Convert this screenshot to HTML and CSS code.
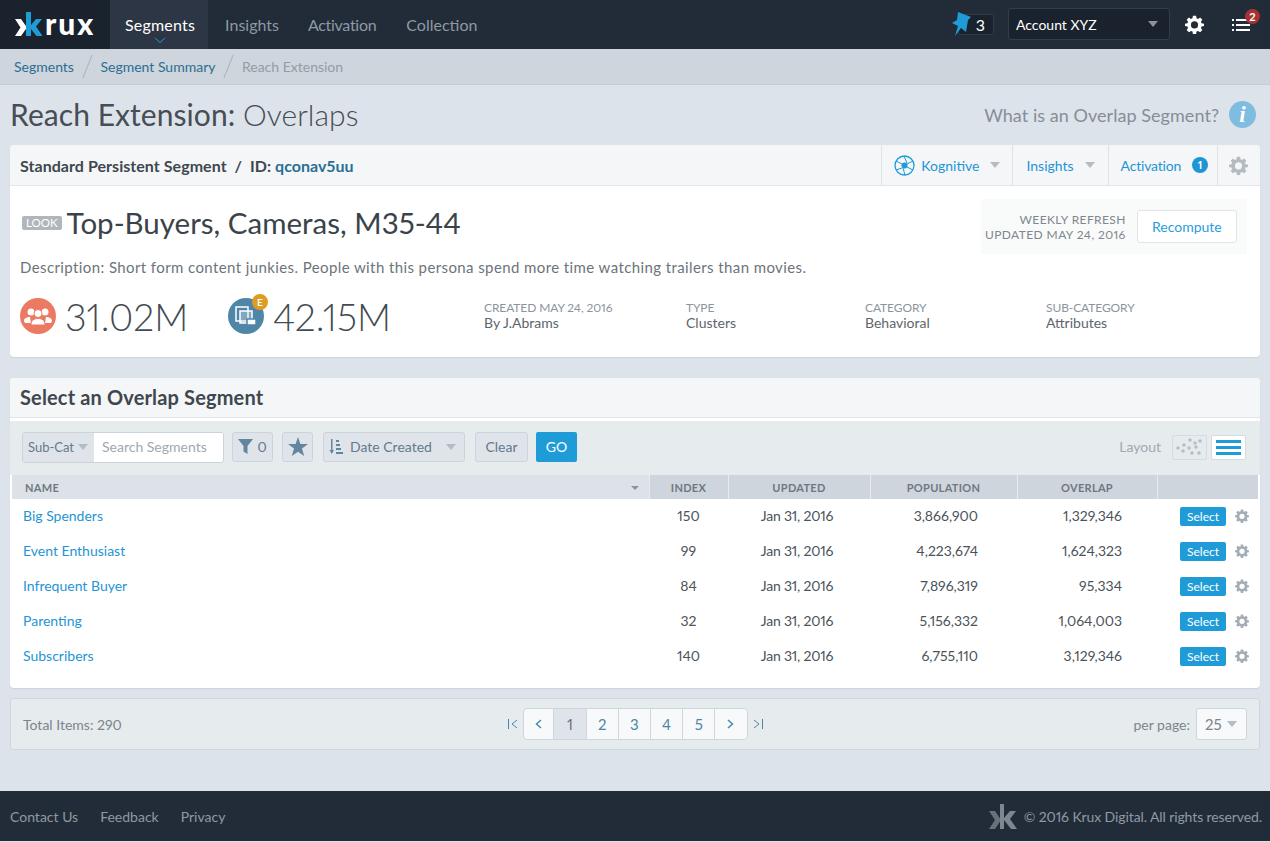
FILE: index.html
```html
<!DOCTYPE html>
<html lang="en">
<head>
    <meta charset="UTF-8">
    <title>Krux - Reach Extension: Overlaps</title>
    <link rel="stylesheet" href="styles.css">
</head>
<body>
    <svg class="defs" width="0" height="0">
        <symbol id="gear" viewBox="0 0 24 24">
            <path fill-rule="evenodd" d="M10 1h4l.6 3.100 1.900.8L19.100 3.100l2.800 2.800-1.800 2.600.8 1.900L24 11v3l-3.100.6-.8 1.900 1.800 2.600-2.800 2.800-2.600-1.800-1.900.8L14 24h-4l-.6-3.100-1.900-.8-2.600 1.800-2.800-2.800 1.800-2.600-.8-1.900L0 14v-3l3.100-.6.8-1.900-1.800-2.600 2.800-2.800 2.600 1.800 1.900-.8zM12 8a4.500 4.500 0 1 0 0 9 4.500 4.500 0 0 0 0-9z"/>
        </symbol>
    </svg>

    <header class="topbar">
        <a class="logo">
            <svg width="28" height="24" viewBox="0 0 28 24">
                <path fill="#fff" d="M0 7h6l6 8.500L6 24H0l5.500-8.500z"/>
                <path fill="#1f9cd8" d="M11 0h5v13l5-6h6l-6 7.500 6.500 9.500h-6L16 17v7h-5z"/>
            </svg>
            <span>rux</span>
        </a>
        <nav class="mainnav">
            <a class="active">Segments<svg class="caret" width="10" height="5" viewBox="0 0 10 5"><path d="M0 0l5 4.500L10 0" fill="none" stroke="#1f9cd8"/></svg></a>
            <a class="second-nav">Insights</a>
            <a class="narrow">Activation</a>
            <a>Collection</a>
        </nav>
        <div class="topright">
            <div class="pins">
                <svg class="pin" width="22" height="26" viewBox="0 0 22 26"><path fill="#1f9cd8" d="M7 1l13 5-3 3-2 12-5-4-6 8 3-10-6-3 5-3z"/></svg>
                <span>3</span>
            </div>
            <div class="account">Account XYZ<i class="tri"></i></div>
            <svg class="topgear" width="19" height="19"><use href="#gear"/></svg>
            <div class="tasks">
                <svg width="18" height="12" viewBox="0 0 18 12"><path fill="#fff" d="M0 0h2v2H0zM4 0h14v2H4zM0 5h2v2H0zM4 5h14v2H4zM0 10h2v2H0zM4 10h14v2H4z"/></svg>
                <b>2</b>
            </div>
        </div>
    </header>

    <div class="crumbs">
        <a>Segments</a><i></i><a>Segment Summary</a><i></i><span>Reach Extension</span>
    </div>

    <main>
        <div class="pagehead">
            <h1>Reach Extension: <span>Overlaps</span></h1>
            <div class="help">What is an Overlap Segment?<b>i</b></div>
        </div>

        <section class="card summary">
            <div class="sumbar">
                <div class="sumtitle">Standard Persistent Segment &nbsp;/&nbsp; ID: <a>qconav5uu</a></div>
                <div class="sumtabs">
                    <a class="kog">
                        <svg width="21" height="21" viewBox="0 0 21 21" fill="none" stroke="#1f9cd8"><circle cx="10.500" cy="10.500" r="9.500" stroke-width="1.300"/><circle cx="10.500" cy="10.500" r="3" fill="#1f9cd8" stroke="none"/><path d="M10 1l3 7M19 6l-6 3M19 15l-6-3M11 20l-2-7M2 15l6-2M2 6l6 3"/></svg>
                        Kognitive<i class="tri light"></i>
                    </a>
                    <a>Insights<i class="tri light"></i></a>
                    <a class="act">Activation<b>1</b></a>
                    <a class="cog"><svg width="19" height="19"><use href="#gear"/></svg></a>
                </div>
            </div>
            <div class="sumbody">
                <div class="namerow">
                    <div class="name"><em>LOOK</em><h2>Top-Buyers, Cameras, M35-44</h2></div>
                    <div class="refresh">
                        <p>WEEKLY REFRESH<br>UPDATED MAY 24, 2016</p>
                        <button>Recompute</button>
                    </div>
                </div>
                <p class="desc">Description: Short form content junkies. People with this persona spend more time watching trailers than movies.</p>
                <div class="stats">
                    <div class="stat first">
                        <span class="disc red">
                            <svg width="28" height="18" viewBox="0 0 28 18" fill="#fff"><circle cx="7" cy="5" r="3.500"/><circle cx="21" cy="5" r="3.500"/><path d="M0 14c0-3 3-4 6-4l1 6H1zM28 14c0-3-3-4-6-4l-1 6h6z"/><circle cx="14" cy="6.500" r="4" stroke="#ec7a62"/><path d="M7 18c0-5 3-6.500 7-6.500s7 1.500 7 6.500z" stroke="#ec7a62"/></svg>
                        </span>
                        <strong>31.02M</strong>
                    </div>
                    <div class="stat second">
                        <span class="disc blue">
                            <svg width="24" height="22" viewBox="0 0 24 22" fill="none" stroke="#fff" stroke-width="1.500"><path d="M2 2h12v14H2z"/><path d="M6 6h12v12H6z" fill="#dfe9f0" fill-opacity=".35"/><path d="M13 14h9v6h-9z" fill="#fff" stroke="#4f86a8"/></svg>
                            <b>E</b>
                        </span>
                        <strong>42.15M</strong>
                    </div>
                    <dl class="meta m1"><dt>CREATED MAY 24, 2016</dt><dd>By J.Abrams</dd></dl>
                    <dl class="meta m2"><dt>TYPE</dt><dd>Clusters</dd></dl>
                    <dl class="meta m3"><dt>CATEGORY</dt><dd>Behavioral</dd></dl>
                    <dl class="meta m4"><dt>SUB-CATEGORY</dt><dd>Attributes</dd></dl>
                </div>
            </div>
        </section>

        <section class="card listing">
            <h3>Select an Overlap Segment</h3>
            <div class="toolbar">
                <div class="searchbox"><span>Sub-Cat<i class="tri light"></i></span><input placeholder="Search Segments"></div>
                <a class="tool filter">
                    <svg width="15" height="15" viewBox="0 0 15 15"><path fill="#64859f" d="M0 0h15L9.500 7v8l-4-2.500V7z"/></svg>0
                </a>
                <a class="tool star">
                    <svg width="20" height="19" viewBox="0 0 20 19"><path fill="#64859f" d="M10 0l2.400 6.900L20 7l-6 4.600 2.200 7.400L10 14.700 3.800 19 6 11.600 0 7l7.600-.1z"/></svg>
                </a>
                <a class="tool sort">
                    <svg width="14" height="15" viewBox="0 0 14 15"><path fill="#64859f" d="M2 0h1.500v11H5l-2.250 4L.5 11H2zM7 1h3v2H7zM7 5h4v2H7zM7 9h5v2H7zM7 13h7v2H7z"/></svg>
                    Date Created<i class="tri light"></i>
                </a>
                <a class="tool clear">Clear</a>
                <a class="go">GO</a>
                <div class="layout">
                    <span>Layout</span>
                    <a class="lay">
                        <svg width="30" height="20" viewBox="0 0 30 20" fill="#b4bfc9"><circle cx="3" cy="11" r="1.800"/><circle cx="8" cy="14" r="1.800"/><circle cx="9" cy="8" r="1.800"/><circle cx="14" cy="11" r="1.800"/><circle cx="15" cy="3" r="1.800"/><circle cx="20" cy="6" r="1.800"/><circle cx="25" cy="4" r="1.800"/><circle cx="21" cy="10" r="1.800"/><circle cx="17" cy="16" r="1.800"/><circle cx="24" cy="16" r="1.800"/></svg>
                    </a>
                    <a class="lay on"><i></i><i></i><i></i></a>
                </div>
            </div>
            <table>
                <thead>
                    <tr>
                        <th class="c-name">NAME<i class="tri small"></i></th>
                        <th class="c-index">INDEX</th>
                        <th class="c-upd">UPDATED</th>
                        <th class="c-pop">POPULATION</th>
                        <th class="c-over">OVERLAP</th>
                        <th class="c-act"></th>
                    </tr>
                </thead>
                <tbody>
                    <tr>
                        <td class="c-name"><a>Big Spenders</a></td><td class="c-index">150</td><td class="c-upd">Jan 31, 2016</td><td class="c-pop">3,866,900</td><td class="c-over">1,329,346</td>
                        <td class="c-act"><a class="sel">Select</a><svg width="14" height="14"><use href="#gear"/></svg></td>
                    </tr>
                    <tr>
                        <td class="c-name"><a>Event Enthusiast</a></td><td class="c-index">99</td><td class="c-upd">Jan 31, 2016</td><td class="c-pop">4,223,674</td><td class="c-over">1,624,323</td>
                        <td class="c-act"><a class="sel">Select</a><svg width="14" height="14"><use href="#gear"/></svg></td>
                    </tr>
                    <tr>
                        <td class="c-name"><a>Infrequent Buyer</a></td><td class="c-index">84</td><td class="c-upd">Jan 31, 2016</td><td class="c-pop">7,896,319</td><td class="c-over">95,334</td>
                        <td class="c-act"><a class="sel">Select</a><svg width="14" height="14"><use href="#gear"/></svg></td>
                    </tr>
                    <tr>
                        <td class="c-name"><a>Parenting</a></td><td class="c-index">32</td><td class="c-upd">Jan 31, 2016</td><td class="c-pop">5,156,332</td><td class="c-over">1,064,003</td>
                        <td class="c-act"><a class="sel">Select</a><svg width="14" height="14"><use href="#gear"/></svg></td>
                    </tr>
                    <tr>
                        <td class="c-name"><a>Subscribers</a></td><td class="c-index">140</td><td class="c-upd">Jan 31, 2016</td><td class="c-pop">6,755,110</td><td class="c-over">3,129,346</td>
                        <td class="c-act"><a class="sel">Select</a><svg width="14" height="14"><use href="#gear"/></svg></td>
                    </tr>
                </tbody>
            </table>
        </section>

        <div class="pager">
            <div class="total">Total Items: 290</div>
            <div class="pages">
                <svg class="edge" width="10" height="10" viewBox="0 0 10 10" fill="none" stroke="#4f86a8"><path d="M.5 0v10M9 1L4 5l5 4"/></svg>
                <div class="pagelist">
                    <a><svg width="7" height="10" viewBox="0 0 7 10" fill="none" stroke="#4f86a8" stroke-width="1.500"><path d="M6 1L1.500 5 6 9"/></svg></a>
                    <a class="cur">1</a><a>2</a><a>3</a><a>4</a><a>5</a>
                    <a><svg width="7" height="10" viewBox="0 0 7 10" fill="none" stroke="#4f86a8" stroke-width="1.500"><path d="M1 1l4.500 4L1 9"/></svg></a>
                </div>
                <svg class="edge" width="10" height="10" viewBox="0 0 10 10" fill="none" stroke="#4f86a8"><path d="M9.500 0v10M1 1l5 4-5 4"/></svg>
            </div>
            <div class="perpage">per page:<span>25<i class="tri light"></i></span></div>
        </div>
    </main>

    <footer>
        <div class="flinks"><a>Contact Us</a><a>Feedback</a><a>Privacy</a></div>
        <div class="copy">
            <svg width="28" height="25" viewBox="0 0 28 25"><path fill="#67727c" d="M0 7h6l6 9-6 9H0l6-9z"/><path fill="#7d8790" d="M11 0h4v14l6-7h6l-6 8 7 10h-6l-7-9v9h-4z"/></svg>
            <span>© 2016 Krux Digital. All rights reserved.</span>
        </div>
    </footer>
</body>
</html>
```

FILE: styles.css
```css
/* Allgemein */
html, body {
    margin: 0;
    padding: 0;
}
body {
    width: 1270px;
    height: 842px;
    overflow: hidden;
    background: #dde3ea;
    font-family: Lato, "Liberation Sans", sans-serif;
    font-size: 14px;
    font-variant-numeric: lining-nums proportional-nums;
    color: #3f474e;
}
.defs {
    position: absolute;
}
a {
    text-decoration: none;
}
h1, h2, h3, p, dl, dd {
    margin: 0;
}
.tri {
    display: inline-block;
    width: 0;
    height: 0;
    border-left: 5px solid transparent;
    border-right: 5px solid transparent;
    border-top: 6px solid #8b939b;
}
.tri.light {
    border-top-color: #b4bcc4;
}
.tri.small {
    border-left-width: 4px;
    border-right-width: 4px;
    border-top-width: 4px;
}

/* Kopfzeile */
.topbar {
    display: flex;
    height: 49px;
    background: #222c39;
}
.logo {
    display: flex;
    align-items: center;
    width: 110px;
    padding: 0 0 3px 15px;
    box-sizing: border-box;
    background: #1a222d;
    color: #fff;
    font-size: 30px;
    font-weight: 900;
    letter-spacing: 2px;
}
.logo svg {
    margin: 2px 2px 0 0;
}
.mainnav {
    display: flex;
}
.mainnav a {
    position: relative;
    padding: 0 15px;
    line-height: 49px;
    font-size: 16px;
    color: #8f99a3;
}
.mainnav a.active {
    padding: 0 13px 0 15px;
    background: #2c3644;
    color: #fff;
    letter-spacing: .2px;
}
.mainnav .second-nav {
    margin: 0 -1px 0 2px;
}
.mainnav .narrow {
    letter-spacing: -.3px;
}
.caret {
    position: absolute;
    left: 45px;
    bottom: 6px;
}
.topright {
    display: flex;
    align-items: center;
    margin-left: auto;
}
.pins {
    position: relative;
    width: 36px;
    height: 21px;
    margin-right: 14px;
    margin-bottom: 1px;
    border: 1px solid #2f3a47;
    border-radius: 2px;
    background: #1a222d;
    box-sizing: border-box;
    color: #fff;
    font-size: 16px;
    line-height: 19px;
    text-align: right;
    padding-right: 8px;
}
.pin {
    position: absolute;
    left: -8px;
    top: -4px;
}
.account {
    display: flex;
    align-items: center;
    justify-content: space-between;
    width: 162px;
    height: 32px;
    box-sizing: border-box;
    padding: 0 11px 0 7px;
    margin-bottom: 1px;
    border: 1px solid #323d4a;
    border-radius: 3px;
    background: #1a222d;
    color: #fff;
    font-size: 14px;
}
.topgear {
    fill: #fff;
    margin: 0 28px 1px 15px;
}
.tasks {
    position: relative;
    width: 38px;
    margin-top: 1px;
}
.tasks svg {
    display: block;
}
.tasks b {
    position: absolute;
    left: 13px;
    top: -10px;
    width: 15px;
    height: 15px;
    border-radius: 50%;
    background: #a83232;
    color: #fff;
    font-size: 11px;
    line-height: 15px;
    text-align: center;
}

/* Brotkrumen */
.crumbs {
    display: flex;
    align-items: center;
    height: 35px;
    padding-left: 14px;
    background: #ced5dc;
    border-bottom: 1px solid #c4ccd4;
    box-sizing: content-box;
    font-size: 14px;
    color: #939ca5;
}
.crumbs a {
    color: #2a6f93;
}
.crumbs i {
    width: 1px;
    height: 25px;
    margin: 0 12.500px 0 13px;
    background: #a9b2ba;
    transform: rotate(22deg);
}

/* Seitentitel */
main {
    padding: 0 10px;
}
.pagehead {
    display: flex;
    align-items: center;
    justify-content: space-between;
    height: 60px;
}
h1 {
    margin-top: -2px;
    font-size: 30px;
    font-weight: 400;
    letter-spacing: .06px;
    color: #464d54;
}
h1 span {
    font-weight: 300;
}
.help {
    display: flex;
    align-items: center;
    margin: -1px 4px 0 0;
    color: #858e96;
    font-size: 18px;
    letter-spacing: .05px;
}
.help b {
    width: 27px;
    height: 27px;
    margin-left: 10px;
    border-radius: 50%;
    background: #7fbde0;
    color: #fff;
    font: italic 700 23px/27px "Liberation Serif", serif;
    text-align: center;
}

/* Karten */
.card {
    background: #fff;
    border-radius: 4px;
    box-shadow: 0 1px 1px #ccd3da;
}
.sumbar {
    display: flex;
    justify-content: space-between;
    height: 40px;
    background: #f4f6f8;
    border-bottom: 1px solid #e2e6ea;
    border-radius: 4px 4px 0 0;
}
.sumtitle {
    padding-left: 10px;
    font-size: 16px;
    font-weight: 700;
    letter-spacing: .05px;
    line-height: 42px;
    color: #3f474e;
}
.sumtitle a {
    color: #2a6f93;
}
.sumtabs {
    display: flex;
}
.sumtabs a {
    display: flex;
    align-items: center;
    padding: 0 13px;
    border-left: 1px solid #dfe3e7;
    color: #1f95d5;
    font-size: 14px;
}
.sumtabs .kog {
    padding: 0 12px;
}
.sumtabs .kog svg {
    margin-right: 6px;
}
.sumtabs .tri {
    margin-left: 11px;
}
.sumtabs .act {
    padding: 0 9px 0 12px;
    letter-spacing: -.2px;
}
.sumtabs b {
    width: 16px;
    height: 16px;
    margin-left: 11px;
    border-radius: 50%;
    background: #1f95d5;
    color: #fff;
    font-size: 11px;
    line-height: 16px;
    text-align: center;
}
.sumtabs .cog {
    padding: 0 12px 0 11px;
    fill: #b3bbc3;
}
.sumbody {
    height: 171px;
    padding: 0 10px;
    box-sizing: border-box;
}
.namerow {
    display: flex;
    justify-content: space-between;
    align-items: flex-start;
    padding-top: 13px;
}
.name {
    display: flex;
    align-items: center;
    height: 46px;
}
.name em {
    margin: 2px 5px 0 2px;
    padding: 0 4px;
    height: 14px;
    line-height: 14px;
    border-radius: 2px;
    background: #b0b6bc;
    color: #fff;
    font-size: 11.500px;
    font-style: normal;
}
h2 {
    font-size: 29.500px;
    font-weight: 400;
    color: #3b434a;
}
.refresh {
    display: flex;
    align-items: center;
    width: 266px;
    height: 55px;
    margin-right: 3px;
    background: #f9fafa;
    box-sizing: border-box;
    padding: 0 11px 0 4px;
}
.refresh p {
    flex: 1;
    text-align: right;
    white-space: nowrap;
    font-size: 12px;
    line-height: 15px;
    letter-spacing: .4px;
    color: #80878e;
}
.refresh button {
    flex-shrink: 0;
    width: 100px;
    height: 33px;
    margin-left: 11px;
    border: 1px solid #e0e5ea;
    border-radius: 3px;
    background: #fff;
    color: #2a9cdc;
    font-family: inherit;
    font-size: 14px;
}
.desc {
    margin-top: 3px;
    font-size: 15px;
    line-height: 20px;
    letter-spacing: .4px;
    color: #6c747b;
}
.stats {
    position: relative;
    display: flex;
    align-items: center;
    margin-top: 19px;
    height: 40px;
}
.stat {
    display: flex;
    align-items: center;
}
.stat.first {
    width: 208px;
}
.stat.second {
    width: 256px;
}
.stat strong {
    margin-left: 9px;
    font-size: 37.500px;
    font-weight: 300;
    color: #434b52;
}
.disc {
    position: relative;
    display: flex;
    align-items: center;
    justify-content: center;
    width: 36px;
    height: 36px;
    border-radius: 50%;
}
.disc.red {
    background: #ec7a62;
}
.disc.blue {
    background: #4f86a8;
}
.disc b {
    position: absolute;
    right: -4px;
    top: -4px;
    width: 16px;
    height: 16px;
    border-radius: 50%;
    background: #dd9d22;
    color: #fff;
    font-size: 10px;
    line-height: 16px;
    text-align: center;
}
.meta {
    margin-top: -3px;
    font-size: 14px;
    line-height: 15px;
    color: #5d656c;
    width: 181px;
}
.meta.m1 {
    width: 202px;
}
.meta.m2 {
    width: 179px;
}
.meta dt {
    font-size: 12px;
    letter-spacing: -.1px;
    color: #8d959c;
}

/* Liste */
.listing {
    margin-top: 21px;
    height: 310px;
}
h3 {
    height: 40px;
    box-sizing: border-box;
    padding-left: 10px;
    border-bottom: 1px solid #e2e6ea;
    background: #f4f6f8;
    border-radius: 4px 4px 0 0;
    font-size: 20px;
    font-weight: 700;
    letter-spacing: .15px;
    line-height: 38px;
    color: #3f474e;
}
.toolbar {
    display: flex;
    align-items: center;
    height: 54px;
    margin-top: 3px;
    padding: 0 14px 2px 12px;
    box-sizing: border-box;
    background: #e6ebee;
    font-size: 14px;
    color: #64798b;
}
.searchbox {
    display: flex;
    height: 31px;
    box-sizing: border-box;
    border: 1px solid #ccd3da;
    border-radius: 3px;
    overflow: hidden;
}
.searchbox span {
    display: flex;
    align-items: center;
    width: 71px;
    padding-left: 5px;
    box-sizing: border-box;
    background: #dfe4ea;
    font-size: 13px;
}
.searchbox .tri {
    margin-left: 4px;
}
.searchbox input {
    width: 129px;
    padding: 0 8px 2px;
    box-sizing: border-box;
    border: 0;
    background: #fff;
    font-family: inherit;
    font-size: 14px;
}
.searchbox input::placeholder {
    color: #a0a8b0;
    opacity: 1;
}
.tool {
    display: flex;
    align-items: center;
    height: 30px;
    padding-bottom: 1px;
    box-sizing: border-box;
    border: 1px solid #ccd3da;
    border-radius: 3px;
    background: #dfe4ea;
}
.filter {
    width: 41px;
    justify-content: center;
    gap: 4px;
    margin-left: 8px;
}
.star {
    width: 31px;
    justify-content: center;
    margin-left: 9px;
}
.sort {
    width: 142px;
    padding-left: 5px;
    margin-left: 10px;
}
.sort svg {
    margin-right: 7px;
}
.sort .tri {
    margin-left: auto;
    margin-right: 8px;
}
.clear {
    width: 53px;
    justify-content: center;
    margin-left: 10px;
}
.go {
    width: 41px;
    height: 30px;
    margin-left: 8px;
    border-radius: 2px;
    background: #1f9cd8;
    color: #fff;
    line-height: 30px;
    text-align: center;
}
.layout {
    display: flex;
    align-items: center;
    margin-left: auto;
    color: #a0a8b0;
}
.lay {
    display: flex;
    flex-direction: column;
    align-items: center;
    justify-content: center;
    gap: 3px;
    width: 35px;
    height: 25px;
    box-sizing: border-box;
    border: 1px solid #d5dbe0;
    border-radius: 2px;
    margin-left: 4px;
}
.layout span {
    margin-right: 7px;
    padding-bottom: 2px;
}
.lay.on {
    background: #fff;
}
.lay.on i {
    width: 25px;
    height: 3px;
    background: #1f9cd8;
}

/* Tabelle */
table {
    width: 1246px;
    margin-left: 2px;
    border-collapse: collapse;
    table-layout: fixed;
}
th, td {
    box-sizing: border-box;
}
th {
    height: 24px;
    padding: 0;
    background: #ced5dc;
    border-left: 1px solid #e6ebee;
    font-size: 11px;
    font-weight: 700;
    letter-spacing: .3px;
    color: #6f7880;
    text-align: center;
}
th.c-name {
    position: relative;
    background: #dce2e8;
    border-left: 0;
    text-align: left;
    padding-left: 13px;
}
th .tri {
    position: absolute;
    right: 10px;
    top: 11px;
}
td {
    height: 35px;
    padding: 0 0 2px;
    font-size: 14px;
    color: #4b535a;
}
td a {
    color: #1f95d5;
}
td.c-name {
    padding-left: 11px;
}
.c-name {
    width: 637px;
}
.c-index {
    width: 79px;
}
.c-upd {
    width: 142px;
}
.c-pop {
    width: 147px;
}
.c-over {
    width: 140px;
}
td.c-index, td.c-upd {
    text-align: center;
}
td.c-upd {
    padding-right: 4px;
    letter-spacing: -.2px;
}
td.c-pop {
    padding-right: 39px;
    text-align: right;
}
td.c-over {
    padding-right: 35px;
    text-align: right;
}
td.c-act {
    padding-bottom: 1px;
    white-space: nowrap;
}
.c-act svg {
    fill: #a4adb5;
    margin-left: 9px;
    vertical-align: middle;
}
.sel {
    display: inline-block;
    width: 46px;
    height: 19px;
    margin-left: 23px;
    border-radius: 2px;
    background: #1f9cd8;
    color: #fff;
    font-size: 12px;
    line-height: 20px;
    text-align: center;
    vertical-align: middle;
}

/* Seitennavigation */
.pager {
    display: grid;
    grid-template-columns: 1fr auto 1fr;
    align-items: center;
    height: 52px;
    margin-top: 10px;
    padding: 0 12px;
    box-sizing: border-box;
    border: 1px solid #ced5dc;
    border-radius: 3px;
    background: #e6ebee;
    color: #7c858d;
}
.pages {
    display: flex;
    align-items: center;
    gap: 5px;
    margin-left: 1px;
}
.pagelist {
    display: flex;
    height: 32px;
    box-sizing: border-box;
    border: 1px solid #ced5dc;
    border-radius: 4px;
    background: #f7f9fb;
    overflow: hidden;
}
.pagelist a {
    display: flex;
    align-items: center;
    justify-content: center;
    width: 32.200px;
    border-left: 1px solid #ced5dc;
    box-sizing: border-box;
    font-size: 15px;
    color: #4f86a8;
}
.pagelist a:first-child {
    border-left: 0;
    width: 29px;
}
.pagelist .cur {
    background: #dfe4ea;
    color: #6c747b;
}
.perpage {
    display: flex;
    align-items: center;
    justify-content: flex-end;
}
.perpage span {
    display: flex;
    align-items: center;
    justify-content: space-between;
    width: 51px;
    height: 32px;
    margin-left: 6px;
    padding: 0 9px 0 8px;
    box-sizing: border-box;
    border: 1px solid #ced5dc;
    border-radius: 3px;
    background: #f7f9fb;
    font-size: 15px;
}

/* Footer */
footer {
    display: flex;
    align-items: center;
    justify-content: space-between;
    height: 50px;
    margin-top: 41px;
    padding: 0 8px 0 10px;
    background: #222c39;
    color: #8f99a3;
}
.flinks {
    display: flex;
    gap: 22px;
}
.copy {
    display: flex;
    align-items: center;
    gap: 7px;
    letter-spacing: -.1px;
}
```
